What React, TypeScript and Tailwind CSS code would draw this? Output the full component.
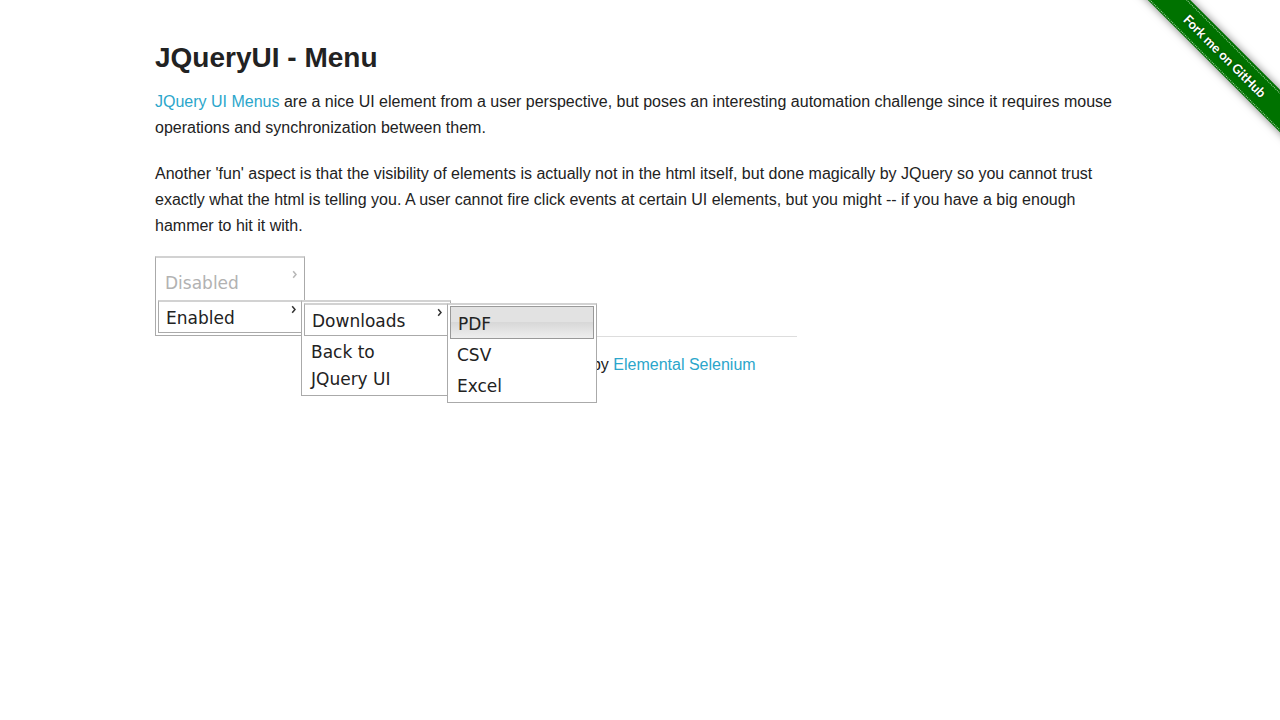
import type { ReactNode } from "react";

const menuBox =
  "w-[150px] border border-t-2 border-[#aaaaaa] border-t-[#d2d2d2] bg-white px-0.5 pt-px font-['DejaVu_Sans',Verdana,sans-serif] text-[17px] leading-[27px] text-[#222222]";
const subMenu = "absolute top-0 left-full -ml-px z-10 pb-px";
const item = "block px-[7px] pt-[3px] pb-px";
const openItem = "block border border-t-2 border-[#aaaaaa] border-t-[#d2d2d2] px-[7px] pt-[3px]";

function Caret({ faded = false }: { faded?: boolean }) {
  return (
    <svg
      className={faded ? "absolute top-[11px] right-1 opacity-35" : "absolute top-[5px] right-[5px]"}
      width="6"
      height="9"
      viewBox="0 0 6 9"
      fill="none"
      stroke="#333333"
      strokeWidth="1.5"
      aria-hidden="true"
    >
      <path d="M1.2 1.2 L4 4.5 L1.2 7.8" />
    </svg>
  );
}

function MenuLink({ href, className = item, children }: { href: string; className?: string; children: ReactNode }) {
  return (
    <a href={href} className={className}>
      {children}
    </a>
  );
}

function Ribbon() {
  return (
    <a href="#github" className="absolute top-0 right-0 block h-[149px] w-[149px] overflow-hidden">
      <span className="absolute top-[41px] left-[-26px] flex h-[30px] w-[240px] rotate-45 items-center justify-center bg-[#007200] font-[Lato,sans-serif] text-[13px] font-bold text-white shadow-[0_0_8px_rgba(0,0,0,0.5)] [text-shadow:0_0_3px_rgba(0,0,0,0.5)]">
        <span className="flex h-[27px] w-full items-center justify-center border-y border-dotted border-[#a6d0a6] pt-px">
          Fork me on GitHub
        </span>
      </span>
    </a>
  );
}

function Menu() {
  return (
    <ul className={`relative z-10 pb-0.5 ${menuBox}`}>
      <li className="relative">
        <a href="#disabled" aria-disabled="true" className="block px-[7px] pt-[11px] pb-[3px] text-[#b2b2b2]">
          Disabled
          <Caret faded />
        </a>
      </li>
      <li className="relative">
        <MenuLink href="#enabled" className={openItem}>
          Enabled
          <Caret />
        </MenuLink>
        <ul className={`${subMenu} ${menuBox}`}>
          <li className="relative">
            <MenuLink href="#downloads" className={openItem}>
              Downloads
              <Caret />
            </MenuLink>
            <ul className={`${subMenu} ${menuBox}`}>
              <li>
                <MenuLink
                  href="#pdf"
                  className="block border border-[#999999] bg-[linear-gradient(#e2e2e2,#e2e2e2_50%,#d8d8d8_50%,#eeeeee)] px-[7px] pt-1"
                >
                  PDF
                </MenuLink>
              </li>
              <li>
                <MenuLink href="#csv">CSV</MenuLink>
              </li>
              <li>
                <MenuLink href="#excel">Excel</MenuLink>
              </li>
            </ul>
          </li>
          <li>
            <MenuLink href="#back">
              Back to <br />
              JQuery UI
            </MenuLink>
          </li>
        </ul>
      </li>
    </ul>
  );
}

export default function App() {
  return (
    <div className="relative min-h-screen overflow-hidden bg-white font-['Liberation_Sans',Arial,sans-serif] text-[16px] text-[#222222]">
      <Ribbon />
      <main className="mx-auto max-w-[970px] pt-[38px]">
        <h1 className="mb-3 text-[28px] leading-[39px] font-bold">JQueryUI - Menu</h1>
        <p className="mb-5 leading-[26px]">
          <a href="#menus" className="text-[#2ba6cb]">JQuery UI Menus</a> are a nice UI element from a user
          perspective, but poses an interesting automation challenge since it requires mouse operations and
          synchronization between them.
        </p>
        <p className="mb-[17px] leading-[26px]">
          Another 'fun' aspect is that the visibility of elements is actually not in the html itself, but done
          magically by JQuery so you cannot trust exactly what the html is telling you. A user cannot fire click
          events at certain UI elements, but you might -- if you have a big enough hammer to hit it with.
        </p>
        <Menu />
      </main>
      <footer className="mx-auto w-[313px] border-t border-[#dddddd] pt-4 text-center">
        Powered by <a href="#elemental" className="text-[#2ba6cb]">Elemental Selenium</a>
      </footer>
    </div>
  );
}
